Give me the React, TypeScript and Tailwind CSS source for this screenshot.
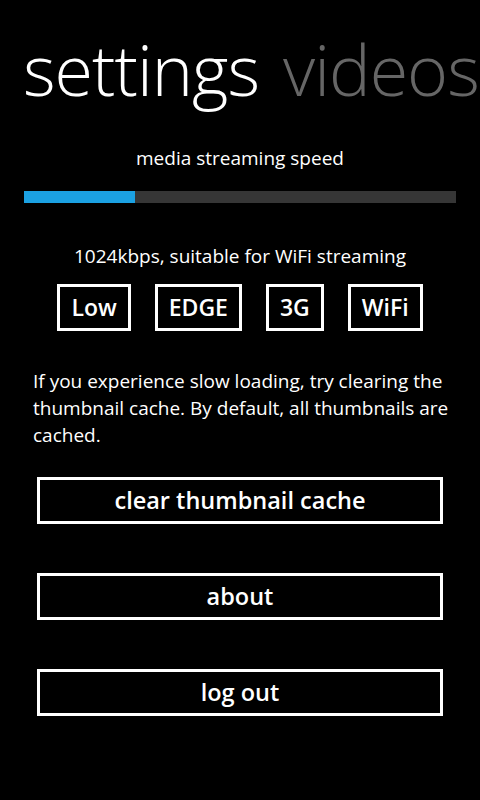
import React from "react"

const speeds = ["Low", "EDGE", "3G", "WiFi"]
const actions = ["clear thumbnail cache", "about", "log out"]

export default function App() {
  return (
    <div
      className="w-[480px] h-[800px] bg-black text-white overflow-hidden"
      style={{ fontFamily: '"Open Sans", "Noto Sans", sans-serif' }}
    >
      <div className="flex gap-[24px] pl-[23px] pt-[24px] whitespace-nowrap text-[70px] font-light leading-[90px] tracking-[-1px]">
        <span>settings</span>
        <span className="text-[#666666]">videos</span>
      </div>

      <div className="px-[24px]">
        <p className="mt-[31px] text-center text-[19px] leading-[26px]">media streaming speed</p>
        <div className="mt-[20px] flex h-[12px] bg-[#363636]">
          <div className="w-[111px] bg-[#1ba1e2]" />
        </div>

        <p className="mt-[40px] text-center text-[19px] leading-[26px]">1024kbps, suitable for WiFi streaming</p>
        <div className="mt-[15px] flex justify-center gap-[24px]">
          {speeds.map((s) => (
            <div
              key={s}
              className="h-[47px] px-[11px] flex items-center border-[3px] border-white text-[23px] font-semibold"
            >
              {s}
            </div>
          ))}
        </div>

        <p className="mt-[37px] pl-[9px] text-[19px] leading-[27px]">
          If you experience slow loading, try clearing the thumbnail cache. By default, all thumbnails are cached.
        </p>
      </div>

      <div className="mt-[28px] px-[37px] flex flex-col gap-[49px]">
        {actions.map((a) => (
          <div
            key={a}
            className="h-[47px] flex items-center justify-center border-[3px] border-white text-[23.5px] font-semibold"
          >
            {a}
          </div>
        ))}
      </div>
    </div>
  )
}
